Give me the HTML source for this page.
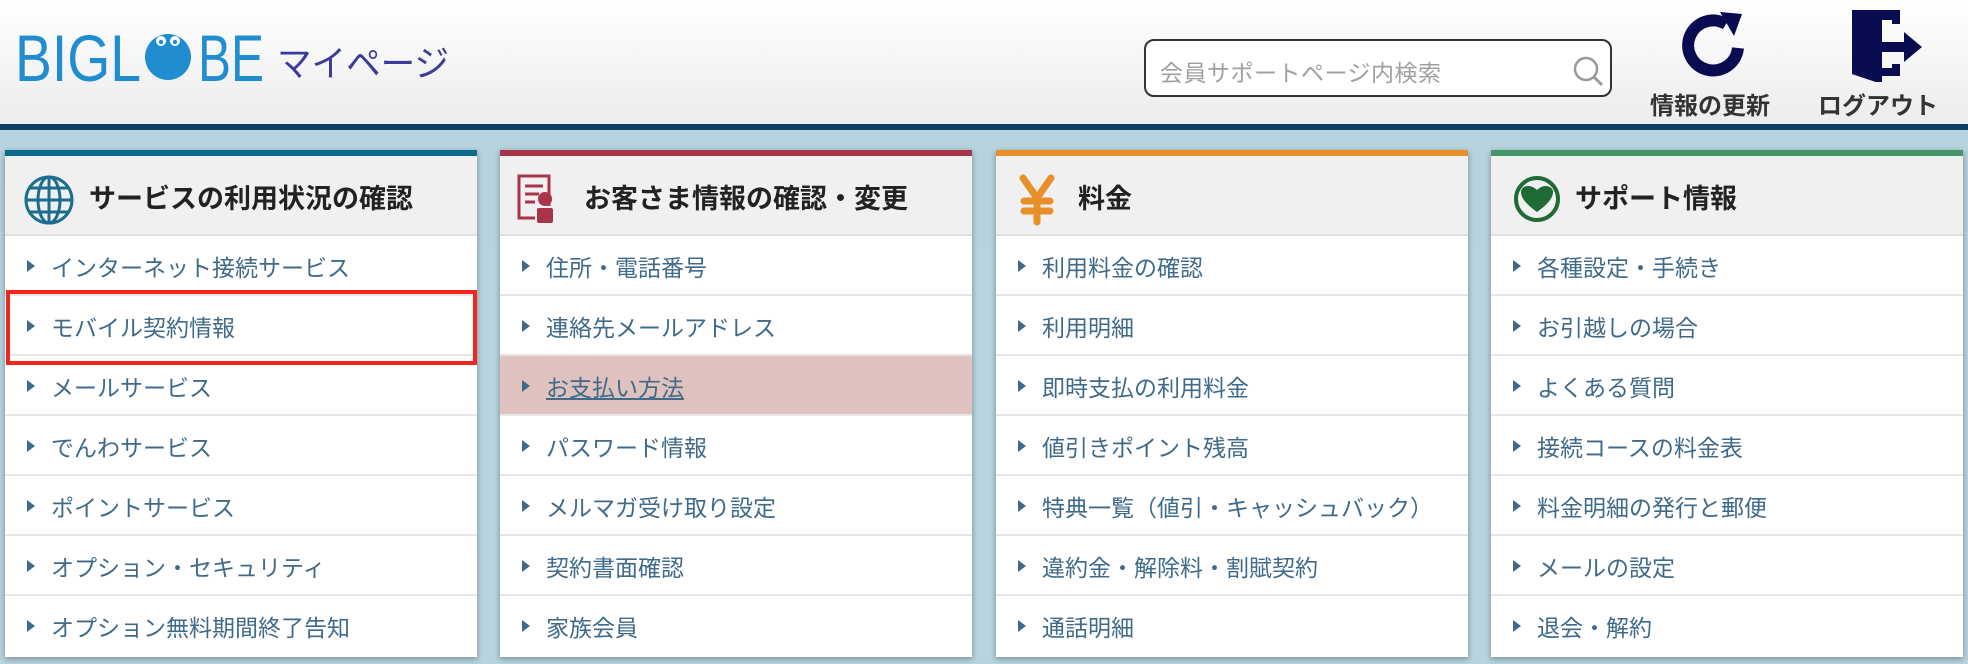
<!DOCTYPE html>
<html lang="ja"><head><meta charset="utf-8">
<style>
*{margin:0;padding:0;box-sizing:border-box}
html,body{width:1968px;height:664px;overflow:hidden}
body{font-family:"Liberation Sans","Noto Sans CJK JP",sans-serif;background:linear-gradient(#a9c6d3 0,#b6d3df 60px,#b8d4df 100%);position:relative}
.hdr{position:absolute;left:0;top:0;width:1968px;height:124px;background:linear-gradient(#ffffff,#ececec)}
.line{position:absolute;left:0;top:124px;width:1968px;height:6px;background:#0c3e66}
.search{position:absolute;left:1144px;top:39px;width:468px;height:58px;border:2px solid #333;border-radius:10px;background:#fff}
.search span{position:absolute;left:14px;top:13px;font-size:23px;color:#a0a0a0;letter-spacing:0.5px}
.hbtn{position:absolute;top:86px;font-size:24px;font-weight:bold;color:#333;white-space:nowrap}
.card{position:absolute;top:150px;width:472px;height:507px;background:#fff;box-shadow:0 2px 6px rgba(0,0,0,.35)}
.card .top{height:6px}
.card .th{height:80px;background:#f0f0f0;border-bottom:2px solid #dedede;position:relative}
.card .th svg{position:absolute}
.card .th b{position:absolute;left:84px;top:21px;font-size:27px;color:#222;white-space:nowrap}
.row{height:60px;border-bottom:2px solid #e6e6e6;position:relative;font-size:23px;color:#3f6a89;white-space:nowrap}
.row:last-child{border-bottom:none}
.row:before{content:"";position:absolute;left:22px;top:24px;border-left:8px solid #3f6a89;border-top:6px solid transparent;border-bottom:6px solid transparent}
.row span{position:absolute;left:46px;top:13px}
.hl{background:#dfc1bd}
.hl span{text-decoration:underline}
.red{position:absolute;left:6px;top:290px;width:471px;height:75px;border:4px solid #f0281c}
</style></head><body>
<div class="hdr"></div>
<div class="line"></div>
<svg style="position:absolute;left:0;top:0" width="480" height="100">
<text x="15" y="81" font-family="Liberation Sans" font-size="66" fill="#1f8dd0" textLength="126" lengthAdjust="spacingAndGlyphs">BIGL</text>
<circle cx="168" cy="57" r="23" fill="#1f8dd0"/>
<circle cx="161" cy="41" r="5" fill="#fff"/><circle cx="161" cy="42" r="2.2" fill="#1f8dd0"/>
<circle cx="175" cy="41" r="5" fill="#fff"/><circle cx="175" cy="42" r="2.2" fill="#1f8dd0"/>
<text x="198" y="81" font-family="Liberation Sans" font-size="66" fill="#1f8dd0" textLength="66" lengthAdjust="spacingAndGlyphs">BE</text>
<text x="277" y="76" font-family="Noto Sans CJK JP" font-size="36" fill="#3b3b9a" textLength="172" lengthAdjust="spacingAndGlyphs">マイページ</text>
</svg>
<div class="search"><span>会員サポートページ内検索</span>
<svg style="position:absolute;left:426px;top:14px" width="34" height="34"><circle cx="14" cy="14" r="11" fill="none" stroke="#999" stroke-width="2.5"/><line x1="22" y1="22" x2="30" y2="30" stroke="#999" stroke-width="3"/></svg></div>
<svg style="position:absolute;left:1680px;top:8px" width="72" height="72">
<path d="M58 40 A25 25 0 1 1 46 16" fill="none" stroke="#0a0c52" stroke-width="12"/>
<polygon points="40,4 62,6 54,28" fill="#0a0c52"/>
</svg>
<div class="hbtn" style="left:1650px">情報の更新</div>
<svg style="position:absolute;left:1848px;top:6px" width="80" height="80">
<polygon points="4,4 52,4 52,18 44,18 44,14 28,14 28,76 4,68" fill="#0a0c52"/>
<polygon points="4,4 28,12 28,76 4,68" fill="#0a0c52"/>
<rect x="28" y="14" width="6" height="62" fill="#0a0c52"/>
<rect x="28" y="62" width="24" height="8" fill="#0a0c52"/>
<rect x="44" y="58" width="8" height="12" fill="#0a0c52"/>
<rect x="28" y="36" width="30" height="10" fill="#0a0c52"/>
<polygon points="56,26 74,41 56,56" fill="#0a0c52"/>
</svg>
<div class="hbtn" style="left:1818px">ログアウト</div>

<div class="card" style="left:5px"><div class="top" style="background:#0d6a8c"></div>
<div class="th"><svg style="left:18px;top:18px" width="52" height="52" fill="none" stroke="#1a6d8c" stroke-width="3"><circle cx="26" cy="26" r="23"/><ellipse cx="26" cy="26" rx="11" ry="23"/><line x1="26" y1="3" x2="26" y2="49"/><line x1="3" y1="26" x2="49" y2="26"/><line x1="7" y1="14" x2="45" y2="14"/><line x1="7" y1="38" x2="45" y2="38"/></svg><b>サービスの利用状況の確認</b></div>
<div class="row"><span>インターネット接続サービス</span></div>
<div class="row"><span>モバイル契約情報</span></div>
<div class="row"><span>メールサービス</span></div>
<div class="row"><span>でんわサービス</span></div>
<div class="row"><span>ポイントサービス</span></div>
<div class="row"><span>オプション・セキュリティ</span></div>
<div class="row"><span>オプション無料期間終了告知</span></div>
</div>

<div class="card" style="left:500px"><div class="top" style="background:#a8344a"></div>
<div class="th"><svg style="left:17px;top:18px" width="40" height="50"><rect x="2" y="2" width="30" height="42" fill="none" stroke="#a8344a" stroke-width="3"/><g stroke="#a8344a" stroke-width="3"><line x1="8" y1="12" x2="26" y2="12"/><line x1="8" y1="20" x2="22" y2="20"/><line x1="8" y1="28" x2="18" y2="28"/></g><circle cx="28" cy="25" r="7" fill="#a8344a"/><rect x="19" y="33" width="18" height="17" rx="3" fill="#a8344a" stroke="#f0f0f0" stroke-width="2"/></svg><b>お客さま情報の確認・変更</b></div>
<div class="row"><span>住所・電話番号</span></div>
<div class="row"><span>連絡先メールアドレス</span></div>
<div class="row hl"><span>お支払い方法</span></div>
<div class="row"><span>パスワード情報</span></div>
<div class="row"><span>メルマガ受け取り設定</span></div>
<div class="row"><span>契約書面確認</span></div>
<div class="row"><span>家族会員</span></div>
</div>

<div class="card" style="left:996px"><div class="top" style="background:#e98f2a"></div>
<div class="th"><svg style="left:22px;top:18px" width="44" height="52" stroke="#e98f2a" stroke-width="7" stroke-linecap="round" fill="none"><polyline points="5,4 19,24 33,4"/><line x1="19" y1="24" x2="19" y2="48"/><line x1="6" y1="27" x2="32" y2="27"/><line x1="6" y1="37" x2="32" y2="37"/></svg><b style="left:82px">料金</b></div>
<div class="row"><span>利用料金の確認</span></div>
<div class="row"><span>利用明細</span></div>
<div class="row"><span>即時支払の利用料金</span></div>
<div class="row"><span>値引きポイント残高</span></div>
<div class="row"><span>特典一覧（値引・キャッシュバック）</span></div>
<div class="row"><span>違約金・解除料・割賦契約</span></div>
<div class="row"><span>通話明細</span></div>
</div>

<div class="card" style="left:1491px"><div class="top" style="background:#45956a"></div>
<div class="th"><svg style="left:21px;top:18px" width="52" height="52"><circle cx="25" cy="25" r="21" fill="none" stroke="#1e6b35" stroke-width="4"/><path d="M25 38 C14 30 9 24 9 18 C9 12 18 9 25 16 C32 9 41 12 41 18 C41 24 36 30 25 38Z" fill="#1e6b35"/></svg><b>サポート情報</b></div>
<div class="row"><span>各種設定・手続き</span></div>
<div class="row"><span>お引越しの場合</span></div>
<div class="row"><span>よくある質問</span></div>
<div class="row"><span>接続コースの料金表</span></div>
<div class="row"><span>料金明細の発行と郵便</span></div>
<div class="row"><span>メールの設定</span></div>
<div class="row"><span>退会・解約</span></div>
</div>

<div class="red"></div>
</body></html>
